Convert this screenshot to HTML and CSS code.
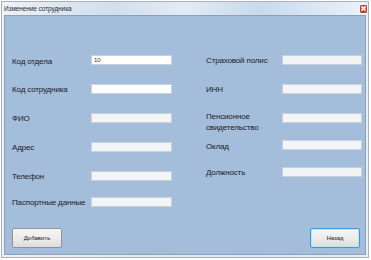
FILE: index.html
```
<!DOCTYPE html>
<html lang="ru">
<head>
<meta charset="utf-8">
<title>Изменение сотрудника</title>
<link rel="stylesheet" href="styles.css">
</head>
<body>
<div class="window">
  <div class="titlebar">
    <span class="title">Изменение сотрудника</span>
    <span class="close"><svg width="5" height="5" viewBox="0 0 5 5"><path d="M0.5 0.5L4.5 4.5M4.5 0.5L0.5 4.5" stroke="#fff" stroke-width="1.2"/></svg></span>
  </div>
  <div class="client">
    <div class="form">
      <div class="col col-left">
        <div class="row r1"><span class="lbl">Код отдела</span><span class="inp white"><span class="val">10</span></span></div>
        <div class="row r2"><span class="lbl">Код сотрудника</span><span class="inp white"></span></div>
        <div class="row r3"><span class="lbl">ФИО</span><span class="inp"></span></div>
        <div class="row r4"><span class="lbl">Адрес</span><span class="inp"></span></div>
        <div class="row r5"><span class="lbl">Телефон</span><span class="inp"></span></div>
        <div class="row"><span class="lbl">Паспортные данные</span><span class="inp"></span></div>
      </div>
      <div class="col col-right">
        <div class="row q1"><span class="lbl">Страховой полис</span><span class="inp"></span></div>
        <div class="row q2"><span class="lbl">ИНН</span><span class="inp"></span></div>
        <div class="row q3"><span class="lbl two">Пенсионное<br>свидетельство</span><span class="inp"></span></div>
        <div class="row q4"><span class="lbl low">Оклад</span><span class="inp"></span></div>
        <div class="row"><span class="lbl">Должность</span><span class="inp"></span></div>
      </div>
    </div>
    <div class="buttons">
      <button class="btn">Добавить</button>
      <button class="btn focus">Назад</button>
    </div>
  </div>
</div>
</body>
</html>
```
FILE: styles.css
```
html, body {
  margin: 0;
  padding: 0;
  background: #ffffff;
}
body {
  font-family: "Liberation Sans", Arial, sans-serif;
  color: #1a1f26;
}
.window {
  margin: 1px 0 0 1px;
  width: 368px;
  height: 257px;
  box-sizing: border-box;
  border: 1px solid #a9b2bc;
  background: linear-gradient(90deg, #eef2f6 0%, #e2eaf2 40%, #dce8f4 70%, #e6eef6 100%);
  display: flex;
  flex-direction: column;
  padding: 0 2px 2px 2px;
}
.titlebar {
  height: 13px;
  display: flex;
  align-items: center;
  justify-content: space-between;
  background: linear-gradient(90deg, rgba(255,255,255,0) 0%, rgba(196,214,234,0.6) 30%, rgba(230,238,246,0.4) 50%, rgba(190,212,236,0.7) 70%, rgba(240,246,252,0.5) 100%);
}
.title {
  font-size: 6.5px;
  color: #2a2f36;
  letter-spacing: -0.1px;
}
.close {
  width: 7px;
  height: 8px;
  background: linear-gradient(#e98560, #c9432a);
  border: 1px solid #a8472e;
  border-radius: 1px;
  display: flex;
  align-items: center;
  justify-content: center;
  margin-right: -1px;
  box-sizing: border-box;
}
.client {
  flex: 1;
  background: #a4bdda;
  border: 1px solid #8da0b6;
  display: flex;
  flex-direction: column;
  padding: 39px 5px 6px 7px;
}
.form {
  display: flex;
}
.col {
  display: flex;
  flex-direction: column;
}
.col-left {
  width: 160px;
  margin-right: 34px;
}
.col-right {
  width: 156px;
}
.row {
  display: grid;
  grid-template-rows: 10px;
  height: 10px;
  align-items: center;
}
.col-left .row { grid-template-columns: 79px 81px; }
.col-right .row { grid-template-columns: 76px 80px; }
.r1, .r2, .r3, .r4 { margin-bottom: 19px; }
.r5 { margin-bottom: 16px; }
.q1, .q2 { margin-bottom: 19px; }
.q3 { margin-bottom: 17px; }
.q4 { margin-bottom: 17px; }
.lbl {
  font-size: 8px;
  line-height: 11px;
  white-space: nowrap;
  letter-spacing: -0.15px;
  color: #1b2129;
}
.r1 .lbl { margin-top: 3px; }
.lbl.two {
  align-self: start;
  margin-top: -2px;
}
.lbl.low { margin-top: 2px; }
.inp {
  height: 10px;
  box-sizing: border-box;
  background: #f3f4f5;
  border: 1px solid #c7d2de;
  display: flex;
  align-items: center;
}
.inp.white { background: #ffffff; }
.val {
  font-size: 6px;
  padding-left: 2px;
  color: #333;
}
.buttons {
  margin-top: auto;
  display: flex;
  justify-content: space-between;
}
.btn {
  width: 50px;
  height: 20px;
  box-sizing: border-box;
  border: 1px solid #8f9398;
  border-radius: 2px;
  background: linear-gradient(#f6f6f6 0%, #ececec 50%, #dcdcdc 100%);
  font-family: "Liberation Sans", Arial, sans-serif;
  font-size: 6px;
  color: #222;
  padding: 0;
}
.btn.focus {
  border-color: #3c9ad6;
  box-shadow: inset 0 0 0 1px #bfe3f7;
}
```
